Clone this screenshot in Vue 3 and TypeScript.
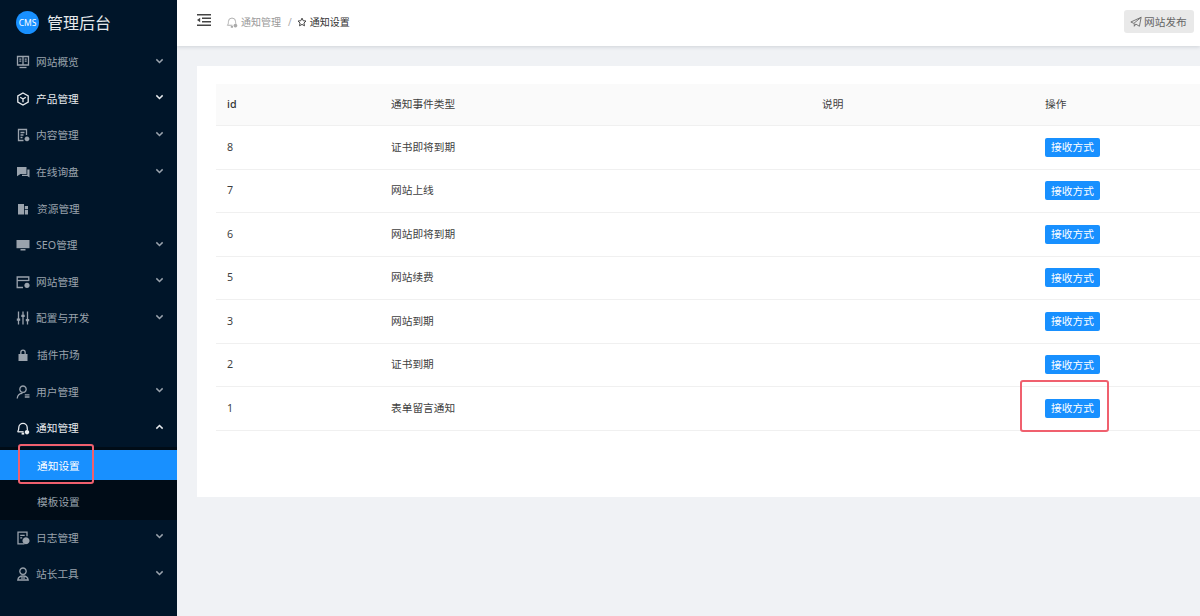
<script setup lang="ts">
interface NavItem { label: string; icon: string; chevron: boolean; tone?: string; gap?: boolean; up?: boolean }

const icons: Record<string, { stroke?: string[]; fill?: string[] }> = {
  overview: { stroke: ['M1.5 1.5h11v8.5h-11z', 'M7 1.5v8.5', 'M3.3 4.2h2M3.3 6.2h2M8.7 4.2h2M8.7 6.2h2', 'M3.5 12.5h7'] },
  product: { stroke: ['M7 1l5.2 3v6L7 13l-5.2-3V4z', 'M4.2 5.2L7 7l2.8-1.8M7 7v3.2'] },
  content: { stroke: ['M10.5 7V1.5h-8v11h5', 'M4.5 4.5h4M4.5 7h3M4.5 9.5h2'], fill: ['M11 8.5a2.4 2.4 0 1 1-.01 0z'] },
  chat: { fill: ['M1 2h9.5v7H4.5L1 11.2z', 'M11.3 4.5H13.5v8L11.3 11H6V9.8h5.3z'] },
  resource: { fill: ['M2 2h6v10.5H2z', 'M8.8 4h3.2v3.3H8.8zM8.8 8.1h3.2v4.4H8.8z'] },
  seo: { fill: ['M.5 2h13v8.2H.5z', 'M4.5 11h5v1.5h-5z'] },
  site: { stroke: ['M12.8 6V2h-11.6v10.5H7', 'M1.2 5.5h11.6'], fill: ['M11 7.8a2.6 2.6 0 1 1-.01 0z'] },
  config: { stroke: ['M2.5 .5v13M7 .5v13M11.5 .5v13'], fill: ['M.8 7.5h3.4v2.2H.8zM5.3 3.8h3.4V6H5.3zM9.8 8h3.4v2.2H9.8z'] },
  market: { fill: ['M2.5 6h9v7h-9z', 'M4.2 6V4.2a2.8 2.8 0 0 1 5.6 0V6H8.5V4.2a1.5 1.5 0 0 0-3 0V6z'] },
  user: { stroke: ['M7 1a3.2 3.2 0 1 1-.01 0z', 'M1.2 13.5c.3-3.2 2.5-5.2 5.3-5.2', 'M8.8 9.8h4.7M8.8 12h4.7'] },
  bell: { stroke: ['M1.6 10.8c1.2-1.2 1.2-2.7 1.2-4.2a4.2 4.2 0 0 1 8.4 0c0 .8 0 1.6.3 2.4', 'M1.6 10.8h6'], fill: ['M5.6 11.6h2.6v2H5.6z', 'M11 9a2.2 2.2 0 1 1-.01 0z'] },
  log: { stroke: ['M8.5 12.8h-6.5v-11.6h9v4', 'M4.2 4.3h4.5M4.2 6.8h2'], fill: ['M10 6.2a3.5 3.5 0 1 1-.01 0z'] },
  tools: { stroke: ['M7 1a3.2 3.2 0 1 1-.01 0z', 'M1.8 13c.4-2.8 2.5-4 5.2-4s4.8 1.2 5.2 4z', 'M5 11h4'] },
}

const beforeOpen: NavItem[] = [
  { label: '网站概览', icon: 'overview', chevron: true },
  { label: '产品管理', icon: 'product', chevron: true, tone: 'bright' },
  { label: '内容管理', icon: 'content', chevron: true },
  { label: '在线询盘', icon: 'chat', chevron: true },
  { label: '资源管理', icon: 'resource', chevron: false, gap: true },
  { label: 'SEO管理', icon: 'seo', chevron: true },
  { label: '网站管理', icon: 'site', chevron: true },
  { label: '配置与开发', icon: 'config', chevron: true },
  { label: '插件市场', icon: 'market', chevron: false, gap: true },
  { label: '用户管理', icon: 'user', chevron: true },
  { label: '通知管理', icon: 'bell', chevron: true, tone: 'bright', up: true },
]
const afterOpen: NavItem[] = [
  { label: '日志管理', icon: 'log', chevron: true },
  { label: '站长工具', icon: 'tools', chevron: true },
]
const rows = [
  { id: 8, name: '证书即将到期' },
  { id: 7, name: '网站上线' },
  { id: 6, name: '网站即将到期' },
  { id: 5, name: '网站续费' },
  { id: 3, name: '网站到期' },
  { id: 2, name: '证书到期' },
  { id: 1, name: '表单留言通知' },
]
</script>

<template>
  <div class="layout">
    <aside class="side">
      <div class="brand">
        <span class="logo">CMS</span>
        <span class="brand-name">管理后台</span>
      </div>
      <nav class="nav">
        <div v-for="item in beforeOpen" :key="item.label" class="nav-item" :class="item.tone">
          <svg class="nav-icon" viewBox="0 0 14 14" fill="none" stroke="currentColor" stroke-width="1.3">
            <path v-for="d in icons[item.icon].stroke" :key="d" :d="d" />
            <path v-for="d in icons[item.icon].fill" :key="d" :d="d" fill="currentColor" stroke="none" />
          </svg>
          <span class="nav-label" :class="{ gap: item.gap }">{{ item.label }}</span>
          <svg v-if="item.chevron" class="chev" :class="{ up: item.up }" viewBox="0 0 10 6" fill="none" stroke="currentColor" stroke-width="1.6">
            <path d="M1.5 1.2L5 4.6l3.5-3.4" />
          </svg>
        </div>
        <div class="sub">
          <div class="sub-item active"><span>通知设置</span></div>
          <div class="sub-item"><span>模板设置</span></div>
        </div>
        <div v-for="item in afterOpen" :key="item.label" class="nav-item">
          <svg class="nav-icon" viewBox="0 0 14 14" fill="none" stroke="currentColor" stroke-width="1.3">
            <path v-for="d in icons[item.icon].stroke" :key="d" :d="d" />
            <path v-for="d in icons[item.icon].fill" :key="d" :d="d" fill="currentColor" stroke="none" />
          </svg>
          <span class="nav-label">{{ item.label }}</span>
          <svg class="chev" viewBox="0 0 10 6" fill="none" stroke="currentColor" stroke-width="1.6">
            <path d="M1.5 1.2L5 4.6l3.5-3.4" />
          </svg>
        </div>
      </nav>
    </aside>

    <div class="right">
      <header class="top">
        <svg class="fold" viewBox="0 0 14 12" fill="currentColor">
          <path d="M0 0h14v1.4H0zM5 3.6h9V5H5zM5 7h9v1.4H5zM0 10.6h14V12H0z" />
          <path d="M0 6l3.2-2.3v4.6z" />
        </svg>
        <div class="crumbs">
          <svg class="crumb-icon" viewBox="0 0 14 14" fill="none" stroke="currentColor" stroke-width="1.1">
            <path d="M1.6 10.8c1.2-1.2 1.2-2.7 1.2-4.2a4.2 4.2 0 0 1 8.4 0c0 .8 0 1.6.3 2.4M1.6 10.8h6" />
            <path d="M5.6 11.6h2.6v2H5.6zM11 9a2.2 2.2 0 1 1-.01 0z" fill="currentColor" stroke="none" />
          </svg>
          <span class="crumb-muted">通知管理</span>
          <span class="crumb-sep">/</span>
          <svg class="crumb-star" viewBox="0 0 14 14" fill="none" stroke="currentColor" stroke-width="1.4">
            <path d="M7 1.6l1.7 3.6 3.9.5-2.9 2.7.8 3.9L7 10.4l-3.5 1.9.8-3.9-2.9-2.7 3.9-.5z" />
          </svg>
          <span class="crumb-current">通知设置</span>
        </div>
        <button class="publish" type="button">
          <svg viewBox="0 0 14 14" fill="none" stroke="currentColor" stroke-width="1">
            <path d="M13 1.5L1 7l3.5 1.6L13 1.5l-2 10.5-4.2-2.6L5 12V8.8" />
          </svg>
          <span>网站发布</span>
        </button>
      </header>

      <main class="main">
        <section class="card">
          <div class="table">
            <div class="row head">
              <div class="id-head">id</div><div>通知事件类型</div><div>说明</div><div>操作</div>
            </div>
            <div v-for="row in rows" :key="row.id" class="row">
              <div>{{ row.id }}</div>
              <div>{{ row.name }}</div>
              <div></div>
              <div><button class="action" type="button">接收方式</button></div>
            </div>
          </div>
        </section>
      </main>
    </div>

    <div class="mark mark-nav"></div>
    <div class="mark mark-btn"></div>
  </div>
</template>

<style>
html, body { margin: 0; overflow: hidden; background: #f0f2f5; }
</style>

<style scoped>
* { box-sizing: border-box; }
.layout {
  position: relative;
  display: flex;
  width: 1200px;
  height: 616px;
  overflow: hidden;
  font-family: "Noto Sans", "Noto Sans CJK SC", sans-serif;
  font-size: 10.7px;
  color: #3f3f3f;
}
.side { width: 177px; flex: none; background: #001529; color: #9aa3ad; }
.brand { height: 44.5px; padding: 0 0 0 16px; display: flex; align-items: center; }
.logo {
  width: 23px; height: 23px; border-radius: 50%; background: #1890ff; color: #fff;
  font-size: 8.5px; line-height: 23px; text-align: center; flex: none; margin-top: 1px;
}
.brand-name { margin-left: 8px; font-size: 16px; line-height: 22px; color: #e6e9ec; padding-top: 1px; }
.nav-item { height: 36.6px; display: flex; align-items: center; padding: 0 13px 0 16px; }
.nav-item.bright { color: #e8ebee; }
.nav-icon { width: 14px; height: 14px; flex: none; margin-top: -1px; }
.nav-label { margin-left: 6px; flex: 1; line-height: 16px; padding-bottom: 1px; }
.nav-label.gap { margin-left: 7px; }
.chev { width: 9px; height: 6px; flex: none; margin-top: -4px; }
.chev.up { transform: rotate(180deg); }
.sub { background: #000c17; height: 73px; padding-top: 3px; color: #9aa3ad; }
.sub-item { height: 37px; padding-left: 37px; display: flex; align-items: center; }
.sub-item.active { height: 30px; background: #1890ff; color: #fff; margin-bottom: 3px; }
.right { flex: 1; min-width: 0; display: flex; flex-direction: column; }
.top {
  height: 46px; flex: none; background: #fff; display: flex; align-items: center;
  padding: 0 6px 3px 20px; box-shadow: 0 1px 4px rgba(0, 21, 41, .14); position: relative;
}
.fold { width: 14px; height: 12px; color: #444; margin-top: -4px; flex: none; }
.crumbs { margin-left: 15px; display: flex; align-items: center; flex: 1; font-size: 10px; }
.crumb-icon { width: 12px; height: 12px; color: #aaa; }
.crumb-muted { margin-left: 3px; color: #999; }
.crumb-sep { margin: 0 5px 0 7px; color: #aaa; }
.crumb-star { width: 10px; height: 10px; color: #444; }
.crumb-current { margin-left: 3px; color: #333; }
.publish {
  width: 70px; height: 23px; padding: 0 0 0 6px; border: 0; border-radius: 3px; background: #e9e9e9;
  color: #666; display: flex; align-items: center; gap: 2px; font: inherit;
}
.publish svg { width: 12px; height: 12px; }
.main { flex: 1; padding: 20px 0 0 20px; min-height: 0; }
.card { background: #fff; height: 431px; padding: 18px 0 0 19px; }
.row {
  display: grid; grid-template-columns: 164px 431px 223px 1fr; height: 43.5px; align-items: center;
  border-bottom: 1px solid #f0f0f0;
}
.row > div { padding-left: 11px; line-height: 16px; padding-bottom: 1px; }
.head { height: 42px; background: #fafafa; }
.row > .id-head { font-weight: 500; color: #333; }
.action {
  width: 55px; height: 19px; padding: 0; border: 0; border-radius: 2px; background: #1890ff;
  color: #fff; font: inherit; display: block; margin-bottom: -1px;
}
.mark { position: absolute; border: 2px solid #f0606e; border-radius: 3px; pointer-events: none; }
.mark-nav { left: 18px; top: 444px; width: 76px; height: 40px; }
.mark-btn { left: 1020px; top: 380px; width: 89px; height: 52px; }
</style>
